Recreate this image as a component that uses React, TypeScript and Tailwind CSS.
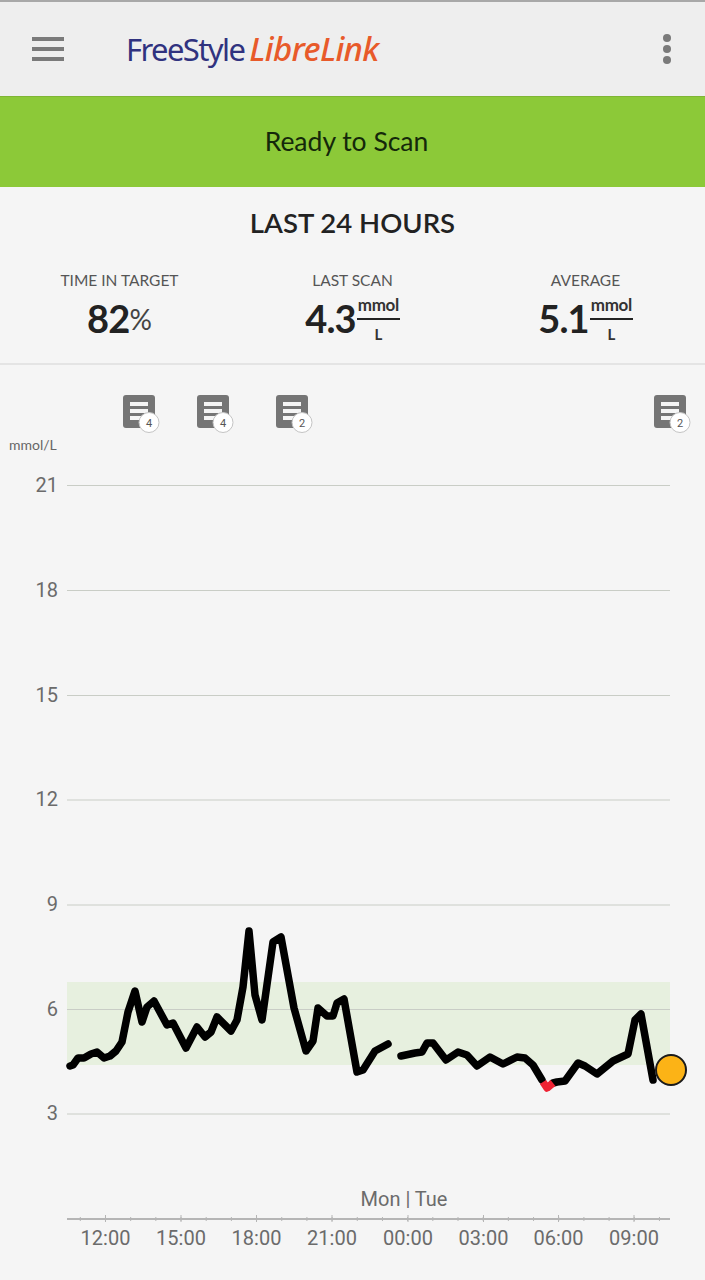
const line1 =
    '70,1066 73,1065 78,1058 84,1058 91,1054 97,1052 104,1058 110,1056 116,1051 122,1042 128,1012 135,991 142,1022 147,1007 154,1001 167,1025 173,1023 186,1048 197,1027 205,1037 211,1032 217,1017 231,1031 237,1020 243,987 249,931 255,995 262,1020 273,942 281,937 294,1008 306,1051 313,1041 318,1008 327,1016 333,1016 337,1003 344,999 357,1072 363,1070 375,1051 388,1044';
const line2 =
    '401,1056 415,1053 422,1052 427,1043 433,1043 446,1060 458,1052 467,1055 477,1066 490,1057 503,1064 517,1057 525,1058 533,1065 542,1080';
const line3 =
    '553,1083 557,1082 565,1081 578,1063 585,1066 597,1074 613,1061 628,1054 635,1020 641,1014 653,1080';

const gridLines = [
    { label: '21', y: 485.5 },
    { label: '18', y: 590.5 },
    { label: '15', y: 695.5 },
    { label: '12', y: 800 },
    { label: '9', y: 905 },
    { label: '6', y: 1009.5 },
    { label: '3', y: 1114 },
];

const times = [
    { label: '12:00', x: 105.5 },
    { label: '15:00', x: 181 },
    { label: '18:00', x: 256.5 },
    { label: '21:00', x: 332 },
    { label: '00:00', x: 408 },
    { label: '03:00', x: 483.5 },
    { label: '06:00', x: 558.5 },
    { label: '09:00', x: 634 },
];

const notes = [
    { x: 123, count: 4 },
    { x: 197, count: 4 },
    { x: 276, count: 2 },
    { x: 654, count: 2 },
];

const minorTicks = Array.from({ length: 24 }, (_, i) => 80.3 + i * 25.18);

function NoteIcon({ x, count }: { x: number; count: number }) {
    return (
        <g>
            <rect x={x} y={395} width={32} height={33} rx={3} fill="#757575" />
            <rect x={x + 7} y={402} width={18} height={4} fill="#f5f5f5" />
            <rect x={x + 7} y={409} width={18} height={4} fill="#f5f5f5" />
            <rect x={x + 7} y={416} width={14} height={4} fill="#f5f5f5" />
            <circle cx={x + 26} cy={422.5} r={10} fill="#ffffff" stroke="#c4c4c4" />
            <text
                x={x + 26}
                y={426.5}
                textAnchor="middle"
                fontSize={11}
                fill="#555555"
                fontFamily="Roboto, sans-serif"
            >
                {count}
            </text>
        </g>
    );
}

function Chart() {
    return (
        <svg
            viewBox="0 365 705 915"
            width={705}
            height={915}
            className="block"
            fontFamily="Roboto, sans-serif"
        >
            {notes.map((n) => (
                <NoteIcon key={n.x} x={n.x} count={n.count} />
            ))}
            <text x={9} y={450} fontSize={14} fill="#666666" fontFamily="Lato, sans-serif">
                mmol/L
            </text>

            <rect x={67} y={982} width={603} height={83} fill="#e7f0df" />

            {gridLines.map((g) => (
                <g key={g.label}>
                    <line x1={67} x2={670} y1={g.y} y2={g.y} stroke="#c9cdc6" strokeWidth={1} />
                    <text x={58} y={g.y + 6} textAnchor="end" fontSize={20} fill="#6b6b6b">
                        {g.label}
                    </text>
                </g>
            ))}

            <polyline points={line1} fill="none" stroke="#000000" strokeWidth={7.5} strokeLinejoin="round" strokeLinecap="round" />
            <polyline points={line2} fill="none" stroke="#000000" strokeWidth={7.5} strokeLinejoin="round" strokeLinecap="round" />
            <polyline points={line3} fill="none" stroke="#000000" strokeWidth={7.5} strokeLinejoin="round" strokeLinecap="round" />
            <polyline points="543,1082 547,1088 553,1083" fill="none" stroke="#ee2233" strokeWidth={7.5} strokeLinejoin="round" />
            <circle cx={671} cy={1070} r={15} fill="#fcb316" stroke="#1a1a1a" strokeWidth={2} />

            <text x={404} y={1206} textAnchor="middle" fontSize={20} fill="#6b6b6b">
                Mon | Tue
            </text>
            <line x1={67} x2={670} y1={1219} y2={1219} stroke="#b5b5b5" strokeWidth={2} />
            {minorTicks.map((x) => (
                <line key={x} x1={x} x2={x} y1={1217} y2={1221} stroke="#b5b5b5" strokeWidth={1} />
            ))}
            {times.map((t) => (
                <g key={t.label}>
                    <line x1={t.x} x2={t.x} y1={1215} y2={1222} stroke="#b5b5b5" strokeWidth={1} />
                    <text x={t.x} y={1245} textAnchor="middle" fontSize={20} fill="#6b6b6b">
                        {t.label}
                    </text>
                </g>
            ))}
        </svg>
    );
}

function Fraction() {
    return (
        <div className="flex flex-col items-center self-start ml-px text-[#333333]">
            <div className="text-[17px] leading-[20px] font-bold border-b-2 border-[#222222] w-[43px] text-center tracking-[-0.3px] pb-[3px]">
                mmol
            </div>
            <div className="text-[15px] leading-[20px] font-bold mt-[4px]">L</div>
        </div>
    );
}

function Stat({ title, value, unit }: { title: string; value: string; unit: React.ReactNode }) {
    return (
        <div className="flex flex-col items-center">
            <div className="text-[15.5px] leading-[20px] text-[#555555]">{title}</div>
            <div className="flex items-center h-[46px] mt-[5px]">
                <span className="text-[38px] leading-none font-bold text-[#222222] tracking-[-0.8px]">{value}</span>
                {unit}
            </div>
        </div>
    );
}

export default function App() {
    return (
        <div className="w-[705px] h-[1280px] overflow-hidden bg-[#f5f5f5] font-['Lato',sans-serif]">
            <header className="h-[97px] bg-[#eeeeee] border-t-2 border-[#a8a8a8] flex items-center pl-[32px] pr-[34px] border-b border-b-[#7fb534]">
                <div className="flex flex-col gap-[6px] w-[32px]">
                    <div className="h-[4px] bg-[#7a7a7a]" />
                    <div className="h-[4px] bg-[#7a7a7a]" />
                    <div className="h-[4px] bg-[#7a7a7a]" />
                </div>
                <div className="ml-[62px] mb-[2px] flex items-baseline text-[31px] leading-none font-['Noto_Sans',sans-serif]">
                    <span className="text-[#30327f] tracking-[-1.6px]">FreeStyle</span>
                    <span className="ml-[5px] text-[33px] font-medium text-[#e85a2a] italic tracking-[-0.7px]">LibreLink</span>
                </div>
                <div className="ml-auto flex flex-col gap-[3px]">
                    <div className="w-[8px] h-[8px] rounded-full bg-[#7a7a7a]" />
                    <div className="w-[8px] h-[8px] rounded-full bg-[#7a7a7a]" />
                    <div className="w-[8px] h-[8px] rounded-full bg-[#7a7a7a]" />
                </div>
            </header>

            <div className="h-[90px] bg-[#8cc938] flex items-center justify-center text-[26.5px] text-[#14280a] pr-[12px]">
                Ready to Scan
            </div>

            <section className="h-[178px] border-b-2 border-[#e4e4e4] pt-[18px]">
                <h1 className="text-center text-[27.5px] leading-[36px] font-semibold text-[#222222]">LAST 24 HOURS</h1>
                <div className="grid grid-cols-3 px-[3px] mt-[29px]">
                    <Stat
                        title="TIME IN TARGET"
                        value="82"
                        unit={<span className="text-[28px] text-[#444444] leading-none mt-[2px]">%</span>}
                    />
                    <Stat title="LAST SCAN" value="4.3" unit={<Fraction />} />
                    <Stat title="AVERAGE" value="5.1" unit={<Fraction />} />
                </div>
            </section>

            <Chart />
        </div>
    );
}
